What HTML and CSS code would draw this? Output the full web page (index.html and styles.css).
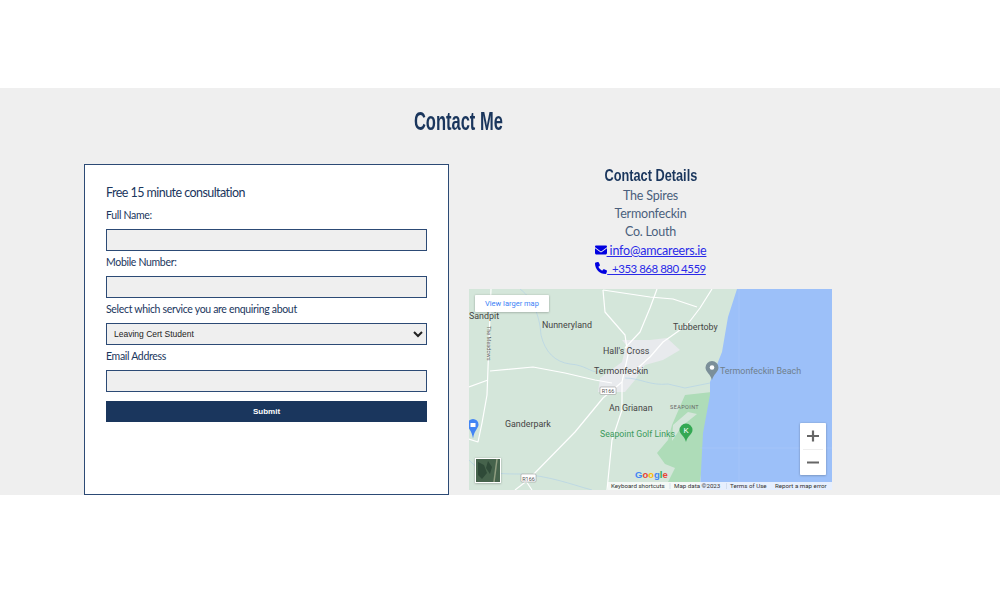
FILE: index.html
```html
<!DOCTYPE html>
<html lang="en">
<head>
  <meta charset="UTF-8" />
  <meta name="viewport" content="width=device-width, initial-scale=1.0"/>
  <title>Contact Me</title>
  <link rel="stylesheet" href="styles.css">
</head>
<body>
  <section class="contact">
    <div class="container">
      <h2><span>Contact Me</span></h2>
      <div class="columns">
        <form class="form-box">
          <h3>Free 15 minute consultation</h3>
          <label for="fullName">Full Name:</label>
          <input type="text" id="fullName" />
          <label for="mobile">Mobile Number:</label>
          <input type="text" id="mobile" />
          <label for="service">Select which service you are enquiring about</label>
          <select id="service">
            <option>Leaving Cert Student</option>
          </select>
          <label for="email">Email Address</label>
          <input type="text" id="email" />
          <button type="button">Submit</button>
        </form>

        <div class="details">
          <h4><span>Contact Details</span></h4>
          <p>The Spires</p>
          <p>Termonfeckin</p>
          <p>Co. Louth</p>
          <p><a href="#"><svg class="icon" viewBox="0 0 512 512"><path d="M48 64C21.5 64 0 85.500 0 112c0 15.100 7.100 29.300 19.200 38.400L236.800 313.600c11.400 8.500 27 8.500 38.400 0L492.800 150.400c12.100-9.100 19.200-23.300 19.200-38.400 0-26.500-21.500-48-48-48H48zM0 176V384c0 35.300 28.700 64 64 64H448c35.300 0 64-28.700 64-64V176L294.400 339.200c-22.800 17.100-54 17.100-76.800 0L0 176z"/></svg> info@amcareers.ie</a></p>
          <p class="phone"><a href="#"><svg class="icon" viewBox="0 0 512 512"><path d="M164.900 24.600c-7.700-18.600-28-28.500-47.400-23.200l-88 24C12.100 30.200 0 46 0 64C0 311.400 200.600 512 448 512c18 0 33.800-12.100 38.600-29.500l24-88c5.300-19.400-4.600-39.700-23.200-47.400l-96-40c-16.300-6.800-35.200-2.100-46.300 11.600L304.700 368C234.300 334.700 177.300 277.700 144 207.300L193.300 167c13.700-11.200 18.400-30 11.600-46.300l-40-96z"/></svg> &nbsp;+353 868 880 4559</a></p>

          <svg class="map" viewBox="469 289 363 201" width="363" height="201">
            <defs>
              <filter id="soft" x="-20%" y="-20%" width="140%" height="140%">
                <feDropShadow dx="0" dy="0.5" stdDeviation="1" flood-opacity="0.3"/>
              </filter>
            </defs>
            <rect x="469" y="289" width="363" height="201" fill="#d4e6da"/>

            <!-- town -->
            <polygon fill="#e8eaed" points="622,340 650,340 667,338 680,350 663,360 645,365 635,380 625,392 598,392 600,378 622,362 626,345"/>

            <!-- golf links -->
            <polygon fill="#aedcb8" points="685,395 712,392 700,482 668,482 675,468 665,464 657,453 668,440 672,425"/>
            <polygon fill="#d4e6da" points="673,425 688,412 697,414 682,426 672,441"/>

            <!-- sea -->
            <polygon fill="#9cc0f9" points="737,289 832,289 832,490 700,490 703,433 710,395 710,382 722,352 728,317"/>
            <path d="M739 289V490M700 448H832" stroke="#adcbfa" stroke-width="0.5" fill="none"/>

            <!-- rivers -->
            <g fill="none" stroke="#b4d3e6" stroke-width="0.7">
              <path d="M520 289 C535 300 540 320 541 335 C545 352 555 362 570 364 C585 365 590 372 598 372 M625 378 C640 378 650 386 668 384 L685 388 L710 383"/>
              <path d="M469 460 C480 472 490 474 520 474 C550 476 570 484 592 490"/>
            </g>

            <!-- roads -->
            <g fill="none" stroke="#fff" stroke-width="1.2" stroke-linejoin="round">
              <path d="M491 289 L488 368 L487 395 L482 423 L478 442 L469 439"/>
              <path d="M469 387 L488 380"/>
              <path d="M490 371 L533 367 L565 373 L595 380 L612 383"/>
              <path d="M603 290 L605 312 L625 335 L628 355 L622 382 L622 410 L612 440 L607 490"/>
              <path d="M603 290 L650 297 L673 299 L697 307"/>
              <path d="M712 289 L700 308 L687 325 L663 342 L650 357 L630 375"/>
              <path d="M657 289 L650 308 L640 332 L625 348"/>
              <path d="M622 382 L603 398 L575 432 L528 480 L515 490"/>
              <path d="M526 481 L532 490"/>
            </g>

            <!-- place names -->
            <g class="place">
              <text x="469" y="319">Sandpit</text>
              <text x="542" y="328">Nunneryland</text>
              <text x="603" y="354">Hall's Cross</text>
              <text x="594" y="374">Termonfeckin</text>
              <text x="673" y="330">Tubbertoby</text>
              <text x="609" y="411">An Grianan</text>
              <text x="505" y="427">Ganderpark</text>
            </g>
            <text class="road-name" transform="translate(487 326) rotate(90)">The Meadows</text>
            <text class="seapoint" x="670" y="409">SEAPOINT</text>
            <text class="golf" x="600" y="437">Seapoint Golf Links</text>
            <text class="beach" x="720" y="374">Termonfeckin Beach</text>

            <!-- shields -->
            <g class="shield">
              <rect x="600" y="387" width="16" height="7.500" rx="1"/>
              <text x="608" y="393">R166</text>
              <rect x="521" y="474" width="15" height="8" rx="1"/>
              <text x="528.500" y="480.500">R166</text>
            </g>

            <!-- pins -->
            <path fill="#7b8f99" d="M712 361a6.500 6.500 0 0 0-6.500 6.500c0 4.500 5 6.500 6.500 12.500 1.500-6 6.500-8 6.500-12.500a6.500 6.500 0 0 0-6.500-6.500z"/>
            <circle cx="712" cy="367.500" r="2.300" fill="#fff"/>
            <path fill="#34a853" d="M686 423.500a6.500 6.500 0 0 0-6.500 6.500c0 4.500 5 5.500 6.500 12 1.500-6.500 6.500-7.500 6.500-12a6.500 6.500 0 0 0-6.500-6.500z"/>
            <text class="pin-letter" x="686" y="433">K</text>
            <path fill="#4285f4" d="M473 419a5.500 5.500 0 0 0-5.500 5.500c0 4 4 5 5.500 14 1.500-9 5.500-10 5.500-14a5.500 5.500 0 0 0-5.500-5.500z"/>
            <rect x="470.500" y="423" width="5" height="4" fill="#fff"/>

            <!-- controls -->
            <g filter="url(#soft)">
              <rect x="475" y="295" width="74" height="17" rx="1" fill="#fff"/>
              <rect x="800" y="423" width="26" height="52" rx="1" fill="#fff"/>
            </g>
            <text class="larger" x="485" y="306">View larger map</text>
            <path d="M803 449.500H823" stroke="#e6e6e6" stroke-width="0.7"/>
            <path d="M813 430.500V441.500M807 436H819M807 462.500H819" stroke="#666" stroke-width="2.200"/>

            <!-- satellite thumb -->
            <rect x="475" y="458" width="26" height="25" fill="#fff" filter="url(#soft)"/>
            <rect x="476" y="459" width="24" height="23" fill="#46634c"/>
            <path d="M478 462l6 3 3 8-5 6-4-4zM488 461l4 6-2 7-4-6z" fill="#2f4a38"/>
            <path d="M497 459L494 482" stroke="#8f9d80" stroke-width="1.500"/>

            <!-- logo -->
            <text class="logo" x="635" y="478"><tspan fill="#4285f4">G</tspan><tspan fill="#ea4335">o</tspan><tspan fill="#fbbc05">o</tspan><tspan fill="#4285f4">g</tspan><tspan fill="#34a853">l</tspan><tspan fill="#ea4335">e</tspan></text>

            <!-- attribution -->
            <rect x="608" y="482" width="224" height="8" fill="#fff" fill-opacity="0.75"/>
            <path d="M670 483V489M726.500 483V489" stroke="#c8d6e8" stroke-width="0.7"/>
            <g class="attrib">
              <text x="611" y="487.500">Keyboard shortcuts</text>
              <text x="674" y="487.500">Map data ©2023</text>
              <text x="730" y="487.500">Terms of Use</text>
              <text x="775" y="487.500">Report a map error</text>
            </g>
          </svg>
        </div>
      </div>
    </div>
  </section>
</body>
</html>
```

FILE: styles.css
```css
* {
  box-sizing: border-box;
}

body {
  margin: 0;
  background: #fff;
  color: #1a365d;
  font-family: 'Lato', 'Open Sans', sans-serif;
}

.contact {
  margin-top: 88px;
  height: 407px;
  background: #efefef;
  overflow: hidden;
}

.container {
  width: 748px;
  margin-left: 84px;
}

h2 {
  margin: 19px 0 0;
  height: 57px;
  text-align: center;
  font-family: 'Liberation Sans', sans-serif;
  font-size: 25px;
  line-height: 28px;
  font-weight: 700;
}

/* the title face is a condensed one, squeeze the nearest installed font */
h2 span, h4 span {
  display: inline-block;
  transform: scaleX(0.66);
}

.columns {
  display: grid;
  grid-template-columns: 365px 363px;
  gap: 20px;
}

.form-box {
  height: 331px;
  padding: 20px 21px 0;
  background: #fff;
  border: 1px solid #2c4a75;
  display: flex;
  flex-direction: column;
}

h3 {
  margin: 0 0 7px;
  font-size: 12.500px;
  letter-spacing: -0.55px;
  line-height: 16px;
  font-weight: 400;
}

label {
  font-size: 10.500px;
  letter-spacing: -0.32px;
  line-height: 14px;
  height: 14px;
  margin-bottom: 7px;
}

input, select {
  width: 100%;
  height: 22px;
  margin-bottom: 4px;
  border: 1px solid #2c4a75;
  border-radius: 0;
  background: #efefef;
}

select {
  padding: 0 3px;
  font-family: 'Liberation Sans', sans-serif;
  font-size: 8.500px;
  color: #222;
}

button {
  width: 100%;
  height: 21px;
  margin-top: 5px;
  border: none;
  background: #1a365d;
  color: #fff;
  font-family: 'Liberation Sans', sans-serif;
  font-size: 8px;
  font-weight: 700;
}

.details {
  text-align: center;
  font-size: 12.500px;
  letter-spacing: -0.2px;
  color: #4a5f7d;
}

h4 {
  margin: 0;
  padding-top: 1px;
  height: 22.500px;
  font-family: 'Liberation Sans', sans-serif;
  font-size: 17px;
  letter-spacing: 0;
  line-height: 21px;
  color: #1a365d;
}

h4 span {
  transform: scaleX(0.75);
}

.details p {
  margin: 0;
  height: 18.400px;
  line-height: 18.400px;
}

.details a {
  color: #2a2ae8;
}

.details .phone {
  font-size: 11.500px;
  letter-spacing: -0.5px;
}

.icon {
  width: 12px;
  height: 12px;
  fill: #0000e0;
  vertical-align: -1px;
}

.map {
  display: block;
  margin-top: 10.500px;
  letter-spacing: 0;
}

.place {
  font-family: 'Roboto', sans-serif;
  font-size: 8.900px;
  fill: #444;
}

.road-name {
  font-family: 'Roboto', sans-serif;
  font-size: 5.500px;
  fill: #666;
}

.seapoint {
  font-family: 'Roboto', sans-serif;
  font-size: 5.500px;
  letter-spacing: 0.4px;
  fill: #666;
}

.golf {
  font-family: 'Roboto', sans-serif;
  font-size: 8.700px;
  fill: #3a9a5a;
}

.beach {
  font-family: 'Roboto', sans-serif;
  font-size: 8.900px;
  fill: #6f7f8c;
}

.shield rect {
  fill: #fff;
  stroke: #888;
  stroke-width: 0.5;
}

.shield text {
  font-family: 'Roboto', sans-serif;
  font-size: 5.500px;
  text-anchor: middle;
  fill: #555;
}

.pin-letter {
  font-family: 'Roboto', sans-serif;
  font-size: 8px;
  text-anchor: middle;
  fill: #fff;
}

.larger {
  font-family: 'Roboto', sans-serif;
  font-size: 7.500px;
  fill: #3b82f6;
}

.logo {
  font-family: 'Liberation Sans', sans-serif;
  font-size: 9.500px;
  font-weight: 700;
}

.attrib {
  font-family: 'Roboto', sans-serif;
  font-size: 6.200px;
  fill: #333;
}
```
